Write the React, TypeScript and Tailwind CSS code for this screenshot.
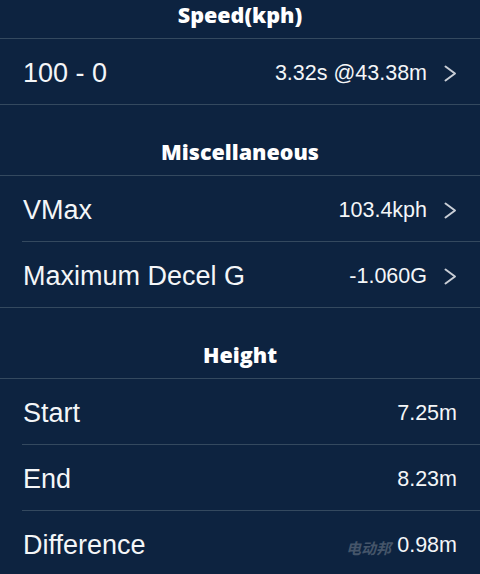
type Row = { label: string; value: string; chevron?: boolean };

const sections: { title: string; rows: Row[] }[] = [
  { title: "Speed(kph)", rows: [{ label: "100 - 0", value: "3.32s @43.38m", chevron: true }] },
  {
    title: "Miscellaneous",
    rows: [
      { label: "VMax", value: "103.4kph", chevron: true },
      { label: "Maximum Decel G", value: "-1.060G", chevron: true },
    ],
  },
  {
    title: "Height",
    rows: [
      { label: "Start", value: "7.25m" },
      { label: "End", value: "8.23m" },
      { label: "Difference", value: "0.98m" },
    ],
  },
];

function Chevron() {
  return (
    <svg width="13" height="17" viewBox="0 0 13 17" className="ml-[17px]" fill="none">
      <polyline points="1.5,1.5 11,8.5 1.5,15.5" stroke="#c9ced6" strokeWidth="2" strokeLinecap="round" strokeLinejoin="round" />
    </svg>
  );
}

function Header({ title, first }: { title: string; first?: boolean }) {
  return (
    <div
      className={`flex items-end justify-center border-b border-[#34495f] ${
        first ? "h-[39px] pb-[11px]" : "h-[71px] pb-[11px]"
      }`}
    >
      <span className="font-['Open_Sans',sans-serif] text-[21.5px] font-extrabold leading-6 text-white">
        {title}
      </span>
    </div>
  );
}

function ListRow({ row, last }: { row: Row; last: boolean }) {
  return (
    <div className="h-[66px]">
      <div className="flex h-[65px] items-center justify-between pl-[23px] pr-[23px] pt-[3px]">
        <span className="text-[27px] text-[#f4f6f8]">{row.label}</span>
        <div className="flex items-center">
          <span className="text-[21.5px] text-[#f4f6f8]">{row.value}</span>
          {row.chevron && <Chevron />}
        </div>
      </div>
      <div className={`h-px bg-[#34495f] ${last ? "" : "ml-[22px]"}`} />
    </div>
  );
}

export default function App() {
  return (
    <div className="relative h-[574px] w-[480px] overflow-hidden bg-[#0d2340] font-['Liberation_Sans',Arial,sans-serif]">
      {sections.map((s, i) => (
        <div key={s.title}>
          <Header title={s.title} first={i === 0} />
          {s.rows.map((r, j) => (
            <ListRow key={r.label} row={r} last={j === s.rows.length - 1} />
          ))}
        </div>
      ))}
      <span className="absolute left-[346px] top-[537px] font-['Noto_Sans_CJK_SC',sans-serif] text-[15px] font-bold italic text-[#5d6b7c] opacity-70">
        电动邦
      </span>
    </div>
  );
}
